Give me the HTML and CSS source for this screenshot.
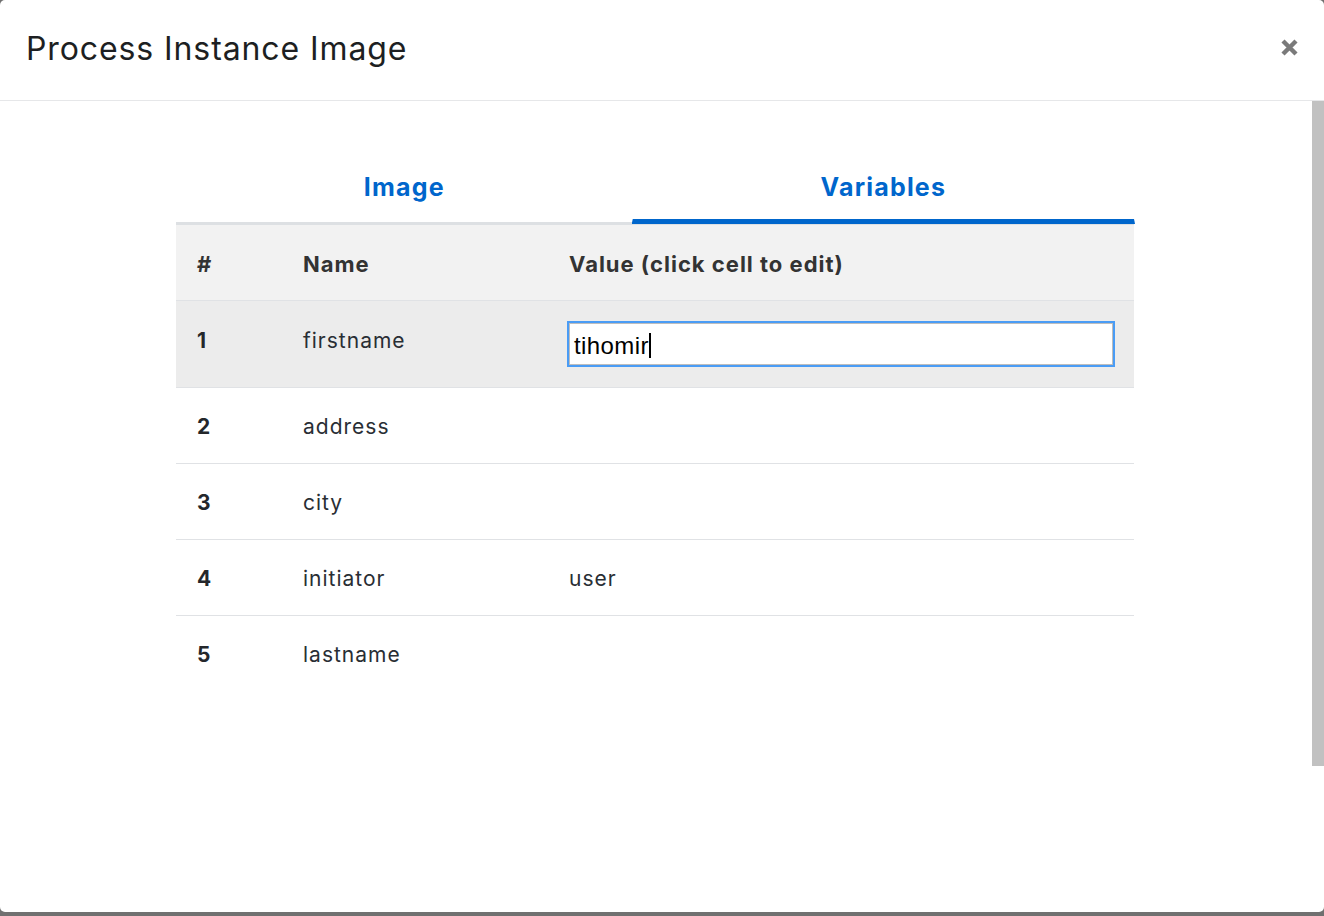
FILE: index.html
```html
<!DOCTYPE html>
<html lang="en">
<head>
<meta charset="utf-8">
<title>Process Instance Image</title>
<link rel="stylesheet" href="styles.css">
</head>
<body>
<div class="modal">
  <header class="modal-header">
    <h1 class="modal-title">Process Instance Image</h1>
    <button class="close" aria-label="Close">
      <svg width="19" height="19" viewBox="0 0 19 19"><path d="M3 3 L16 16 M16 3 L3 16" stroke="#7a7a7a" stroke-width="4.4" stroke-linecap="butt"/></svg>
    </button>
  </header>
  <div class="modal-body">
    <nav class="tabs">
      <a class="tab">Image</a>
      <a class="tab active">Variables</a>
    </nav>
    <table class="vars">
      <colgroup><col class="c-num"><col class="c-name"><col></colgroup>
      <thead>
        <tr><th>#</th><th>Name</th><th>Value (click cell to edit)</th></tr>
      </thead>
      <tbody>
        <tr class="editing">
          <td class="num">1</td><td>firstname</td>
          <td class="edit-cell"><div class="text-input">tihomir<span class="caret"></span></div></td>
        </tr>
        <tr><td class="num">2</td><td>address</td><td></td></tr>
        <tr><td class="num">3</td><td>city</td><td></td></tr>
        <tr><td class="num">4</td><td>initiator</td><td>user</td></tr>
        <tr><td class="num">5</td><td>lastname</td><td></td></tr>
      </tbody>
    </table>
  </div>
  <div class="scroll-thumb"></div>
</div>
</body>
</html>
```

FILE: styles.css
```css
* { box-sizing: border-box; }
html, body { margin: 0; padding: 0; }
body {
  background: #707070;
  font-family: Inter, "Noto Sans", "Liberation Sans", sans-serif;
  color: #292e34;
  width: 1324px;
  height: 916px;
  overflow: hidden;
}
.modal {
  position: relative;
  background: #fff;
  height: 912px;
  border-radius: 5px;
  overflow: hidden;
}
.modal-header {
  height: 101px;
  border-bottom: 1px solid #e6e7e9;
  display: flex;
  align-items: center;
  justify-content: space-between;
  padding: 0 26px 4px 26px;
}
.modal-title {
  margin: 0;
  font-size: 32px;
  font-weight: 400;
  color: #1d1f22;
  letter-spacing: 0.9px;
}
.close {
  border: 0;
  background: none;
  padding: 0;
  margin-right: -1px;
  margin-top: -2px;
  width: 19px;
  height: 19px;
  display: flex;
}
.modal-body {
  padding: 56px 190px 0 176px;
}
.tabs {
  display: flex;
  border-bottom: 3px solid #dde0e3;
}
.tab {
  flex: 1 1 auto;
  text-align: center;
  padding: 17px 0 22px;
  line-height: 26px;
  font-size: 25px;
  font-weight: 700;
  letter-spacing: 1.2px;
  color: #0066cc;
  position: relative;
}
.tab.active::after {
  content: "";
  position: absolute;
  left: -1px;
  right: -1px;
  bottom: -2px;
  height: 5px;
  background: #0066cc;
  clip-path: polygon(1px 0, calc(100% - 1px) 0, 100% 100%, 0 100%);
}
.vars {
  width: 100%;
  border-collapse: collapse;
  table-layout: fixed;
  font-size: 21px;
  letter-spacing: 1px;
  line-height: 24px;
}
.c-num { width: 106px; }
.c-name { width: 266px; }
.vars th, .vars td {
  text-align: left;
  vertical-align: top;
  padding: 27px 21px 24px;
  border-bottom: 1px solid #e0e2e5;
}
.vars tbody tr:last-child td { border-bottom: 0; }
.vars thead tr { background: #f2f2f2; }
.vars th {
  font-size: 22px;
  font-weight: 700;
  color: #333;
  padding-top: 27px;
  padding-bottom: 24px;
}
.vars td.num { font-weight: 700; color: #24272b; }
.vars tr.editing { background: #ececec; }
.vars tr.editing td { padding-top: 28px; }
.vars tr.editing td.edit-cell { padding: 22px 21px 22px 21px; }
.text-input {
  height: 42px;
  background: #fff;
  border: 1px solid #bdbdbd;
  outline: 2px solid #4a9cf5;
  font-family: "Liberation Sans", Arial, sans-serif;
  font-size: 24px;
  letter-spacing: 0.4px;
  line-height: 38px;
  color: #000;
  padding: 3px 4px 0;
  display: flex;
  align-items: center;
}
.caret {
  display: inline-block;
  width: 2px;
  height: 25px;
  background: #000;
  margin-left: 0;
}
.scroll-thumb {
  position: absolute;
  top: 101px;
  right: 0;
  width: 12px;
  height: 665px;
  background: #c1c1c1;
}
```
